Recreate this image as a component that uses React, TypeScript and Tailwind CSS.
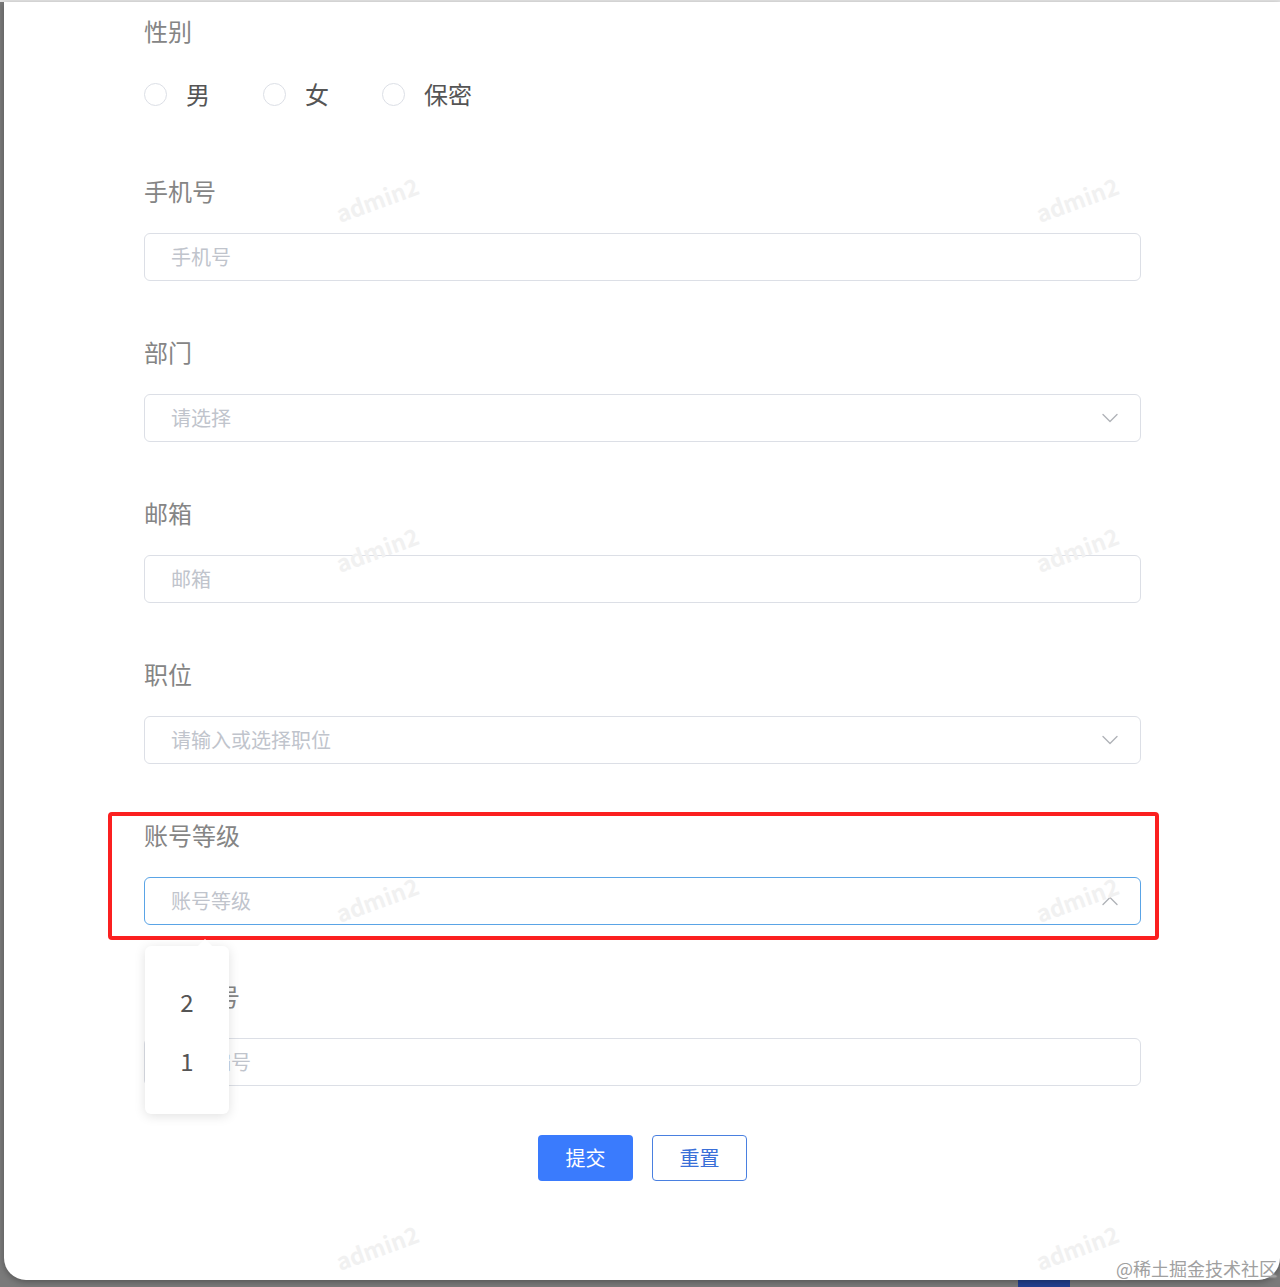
import { ChevronDown, ChevronUp } from 'lucide-react';

const FONT = 'font-["Noto_Sans_CJK_SC","Noto_Sans",sans-serif]';

const WATERMARKS = [
  { x: 330, y: 180 },
  { x: 1030, y: 180 },
  { x: 330, y: 530 },
  { x: 1030, y: 530 },
  { x: 330, y: 880 },
  { x: 1030, y: 880 },
  { x: 330, y: 1228 },
  { x: 1030, y: 1228 },
];

const Label = ({ children }: { children: React.ReactNode }) => (
  <div className="h-[32px] text-[24px] leading-[32px] text-[#858585]">{children}</div>
);

const TextField = ({ placeholder }: { placeholder: string }) => (
  <div className="mt-[26px] flex h-[48px] items-center rounded-[6px] border border-[#dcdfe6] bg-white px-[26px]">
    <span className="text-[20px] text-[#c0c4cc]">{placeholder}</span>
  </div>
);

const SelectField = ({ placeholder, open }: { placeholder: string; open?: boolean }) => (
  <div
    className={
      open
        ? 'mt-[26px] flex h-[48px] items-center justify-between rounded-[6px] border border-[#5aa4e6] bg-white pl-[26px] pr-[16px]'
        : 'mt-[26px] flex h-[48px] items-center justify-between rounded-[6px] border border-[#dcdfe6] bg-white pl-[26px] pr-[16px]'
    }
  >
    <span className="text-[20px] text-[#c0c4cc]">{placeholder}</span>
    {open ? (
      <ChevronUp size={28} strokeWidth={1.2} className="text-[#b0b3b8]" />
    ) : (
      <ChevronDown size={28} strokeWidth={1.2} className="text-[#b0b3b8]" />
    )}
  </div>
);

const Radio = ({ label }: { label: string }) => (
  <div className="flex items-center">
    <span className="h-[23px] w-[23px] rounded-full border border-[#dcdfe6] bg-white" />
    <span className="ml-[19px] text-[24px] text-[#555]">{label}</span>
  </div>
);

export default function App() {
  return (
    <div className={`${FONT} flex h-[1287px] w-[1280px] flex-col overflow-hidden bg-[#7a7a7a]`}>
      <div className="h-[2px] bg-[#e3e3e3]" />
      <div className="flex">
        <div className="w-[4px]" />
        <div className="relative h-[1278px] flex-1 rounded-b-[22px] bg-white shadow-[0_2px_6px_rgba(0,0,0,0.3)]">
          {/* ─── Form ─── */}
          <div className="w-[1137px] pl-[140px] pt-[13px]">
            <div>
              <Label>性别</Label>
              <div className="mt-[26px] flex h-[42px] items-center gap-[53px]">
                <Radio label="男" />
                <Radio label="女" />
                <Radio label="保密" />
              </div>
            </div>

            <div className="mt-[60px]">
              <Label>手机号</Label>
              <TextField placeholder="手机号" />
            </div>

            <div className="mt-[55px]">
              <Label>部门</Label>
              <SelectField placeholder="请选择" />
            </div>

            <div className="mt-[55px]">
              <Label>邮箱</Label>
              <TextField placeholder="邮箱" />
            </div>

            <div className="mt-[55px]">
              <Label>职位</Label>
              <SelectField placeholder="请输入或选择职位" />
            </div>

            <div className="mt-[55px]">
              <Label>账号等级</Label>
              <SelectField placeholder="账号等级" open />
            </div>

            <div className="mt-[55px]">
              <Label>员工编号</Label>
              <TextField placeholder="员工编号" />
            </div>

            <div className="mt-[49px] flex justify-center gap-[19px]">
              <button className="h-[46px] w-[95px] rounded-[4px] bg-[#3a7bfd] text-[20px] text-white">
                提交
              </button>
              <button className="h-[46px] w-[95px] rounded-[4px] border border-[#4a80e0] bg-white text-[20px] text-[#3a6fd8]">
                重置
              </button>
            </div>
          </div>

          {/* ─── Watermarks ─── */}
          {WATERMARKS.map((w) => (
            <span
              key={`${w.x}-${w.y}`}
              className="pointer-events-none absolute -rotate-[20deg] text-[23px] font-semibold text-[#f1f1f1]"
              style={{ left: w.x, top: w.y }}
            >
              admin2
            </span>
          ))}

          {/* ─── Highlight box ─── */}
          <div className="pointer-events-none absolute left-[104px] top-[810px] h-[128px] w-[1051px] rounded-[4px] border-[4px] border-[#fb2020]" />

          {/* ─── Dropdown ─── */}
          <div className="absolute left-[141px] top-[944px] h-[168px] w-[84px] rounded-[6px] bg-white shadow-[0_2px_12px_rgba(0,0,0,0.12)]">
            <div className="absolute -top-[5px] left-[55px] h-[10px] w-[10px] rotate-45 bg-white" />
            <div className="flex flex-col items-center pt-[38px] text-[24px] text-[#555]">
              <span className="h-[36px] leading-[36px]">2</span>
              <span className="mt-[23px] h-[36px] leading-[36px]">1</span>
            </div>
          </div>

          {/* ─── Site mark ─── */}
          <span className="absolute -bottom-[2px] right-[3px] text-[18px] text-[#a0a0a0] [text-shadow:0_0_2px_#fff]">
            @稀土掘金技术社区
          </span>
        </div>
      </div>
      <div className="flex h-[7px]">
        <div className="ml-[1018px] w-[52px] bg-[#23408f]" />
      </div>
    </div>
  );
}
